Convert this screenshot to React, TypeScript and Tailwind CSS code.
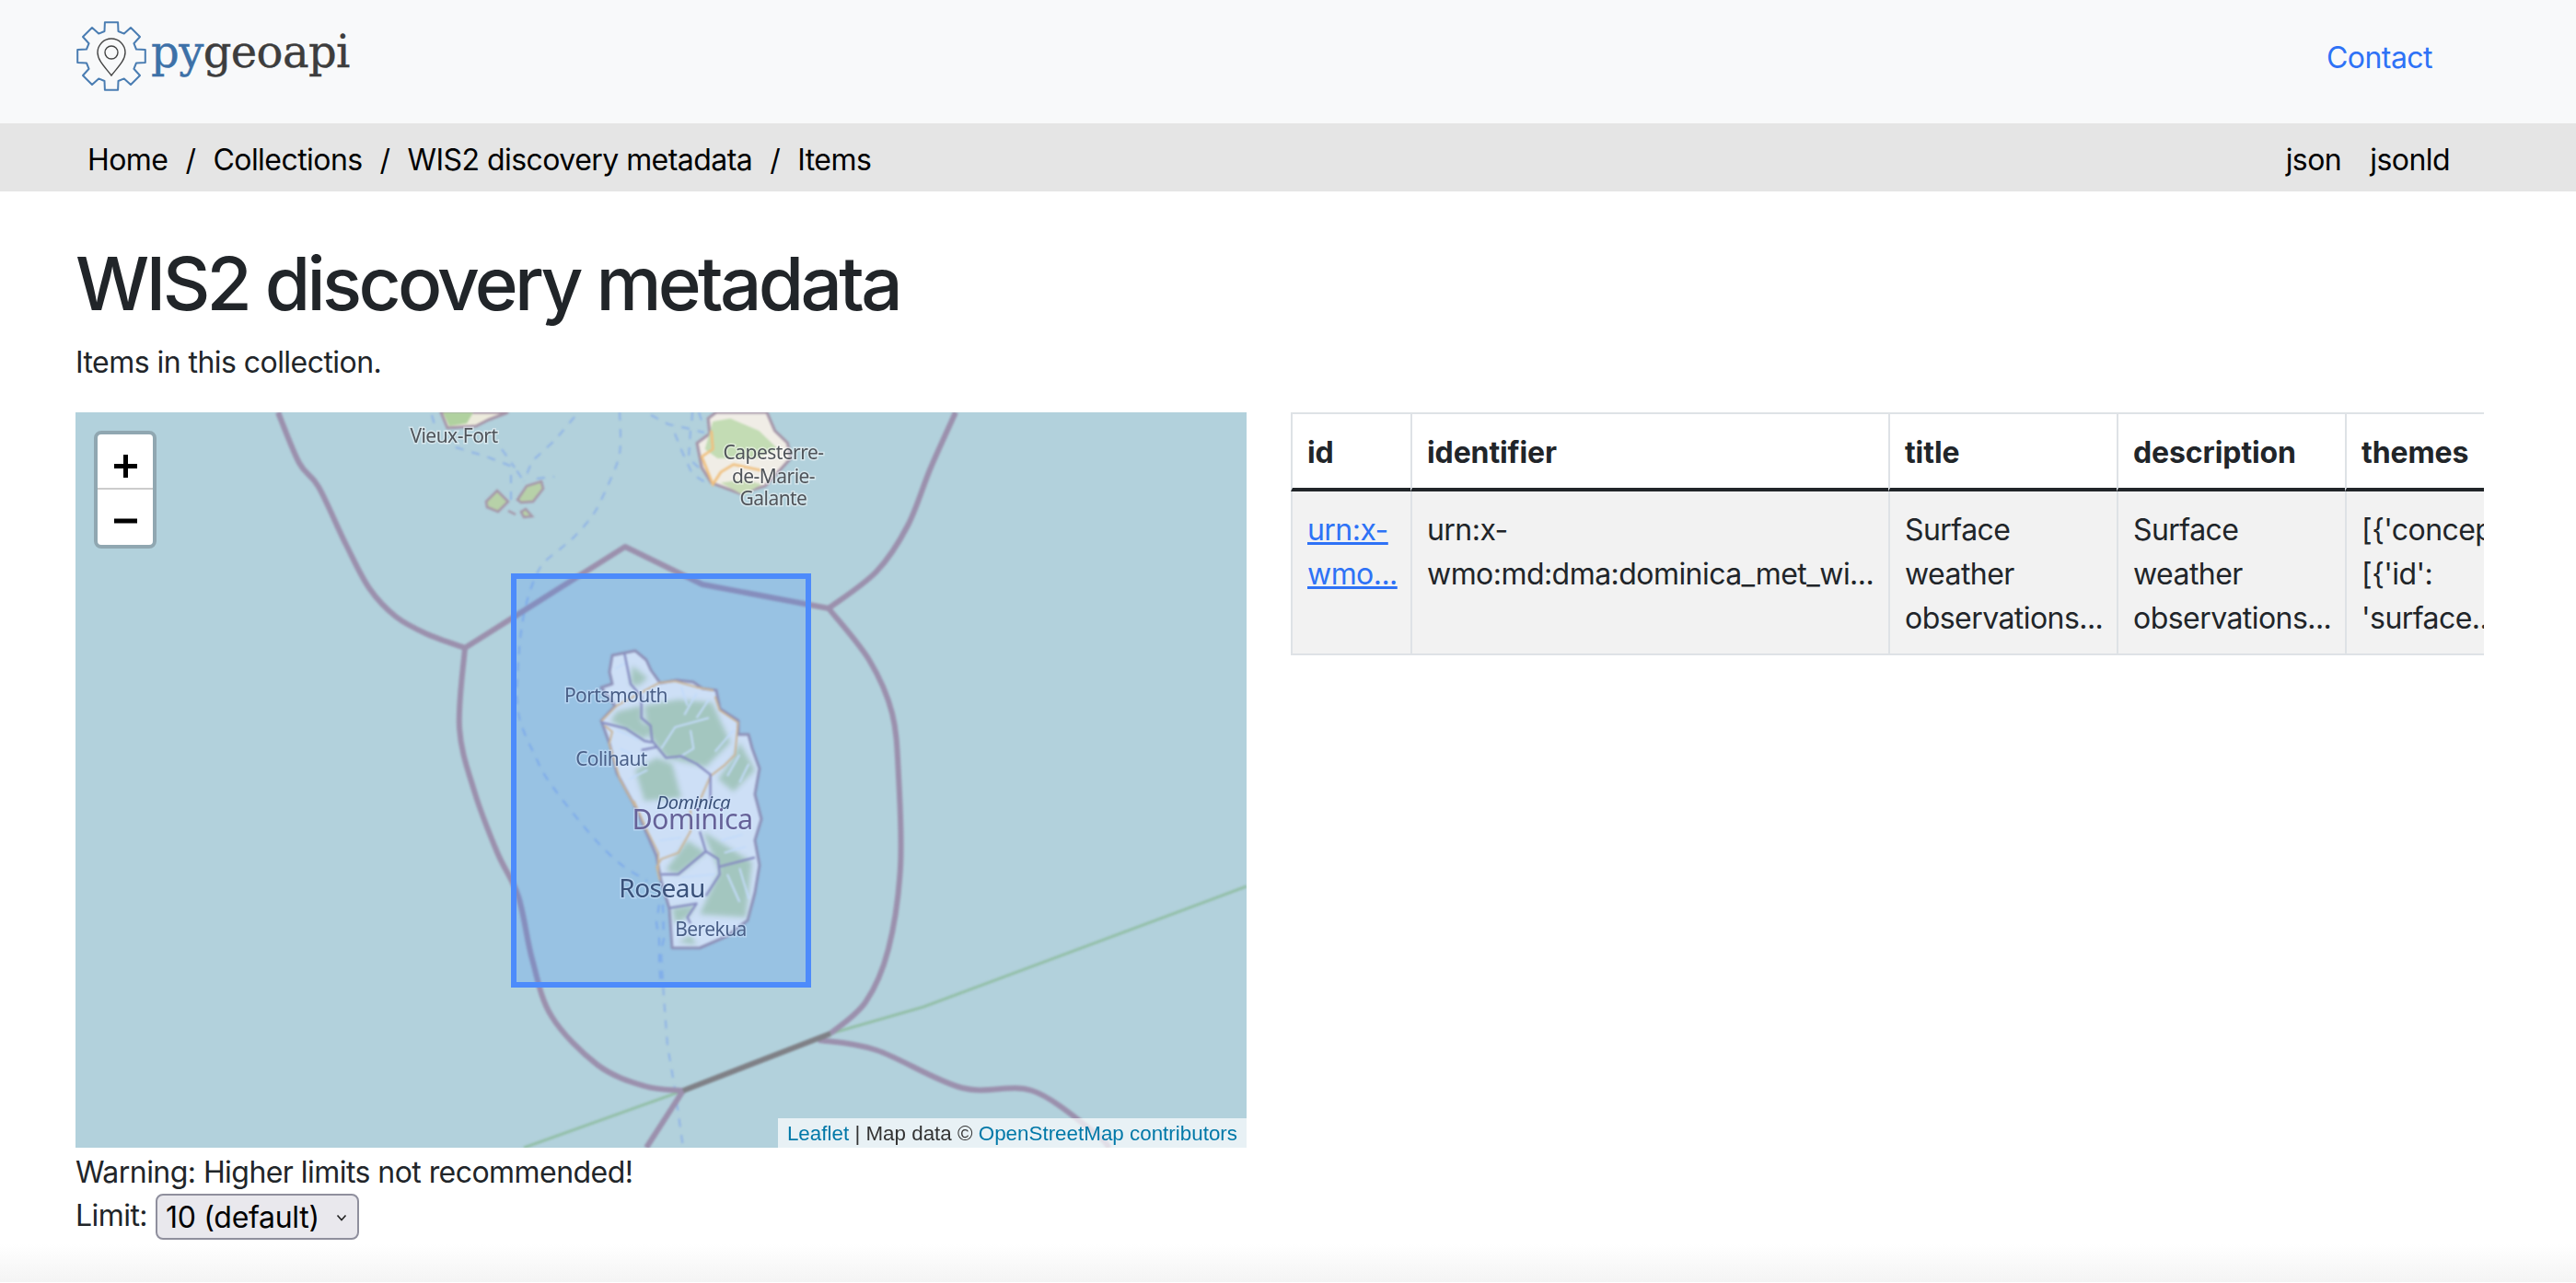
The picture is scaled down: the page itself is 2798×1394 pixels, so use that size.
function gearPath() {
  // 8 teeth, one pointing straight up
  const cx = 39
  const cy = 39
  const outer = 37.5
  const inner = 28
  const pts: string[] = []
  for (let i = 0; i < 8; i++) {
    const a = (i * Math.PI) / 4 - Math.PI / 2
    const w1 = 0.19
    const w2 = 0.27
    const p = (r: number, t: number) =>
      `${(cx + r * Math.cos(t)).toFixed(1)} ${(cy + r * Math.sin(t)).toFixed(1)}`
    pts.push(p(inner, a - w2), p(outer, a - w1), p(outer, a + w1), p(inner, a + w2))
  }
  return `M${pts.join("L")}Z`
}

// catmull-rom through the points, so the borders stay round
function smooth(pts: number[][]) {
  let d = `M${pts[0][0]} ${pts[0][1]}`
  for (let i = 0; i < pts.length - 1; i++) {
    const p0 = pts[i - 1] || pts[i]
    const p1 = pts[i]
    const p2 = pts[i + 1]
    const p3 = pts[i + 2] || p2
    const c1x = p1[0] + (p2[0] - p0[0]) / 6
    const c1y = p1[1] + (p2[1] - p0[1]) / 6
    const c2x = p2[0] - (p3[0] - p1[0]) / 6
    const c2y = p2[1] - (p3[1] - p1[1]) / 6
    d += `C${c1x.toFixed(1)} ${c1y.toFixed(1)} ${c2x.toFixed(1)} ${c2y.toFixed(1)} ${p2[0]} ${p2[1]}`
  }
  return d
}

function Logo() {
  return (
    <div className="flex items-start self-start pt-[22px]">
      <svg width="80" height="80" viewBox="0 0 80 80" fill="none" className="shrink-0">
        <path d={gearPath()} stroke="#4a7db2" strokeWidth={2} strokeLinejoin="round" />
        <path
          d="M39 60C33 52 24 44 24 35A15 15 0 0 1 54 35C54 44 45 52 39 60Z"
          stroke="#444"
          strokeWidth={1.4}
        />
        <circle cx="39" cy="35" r="7" stroke="#444" strokeWidth={1.4} />
      </svg>
      <span className="ml-[2px] mt-[4px] font-['DejaVu_Serif'] text-[48px] leading-[60px] tracking-[-0.6px] text-[#3d3d3d] [-webkit-text-stroke:0.4px_currentColor]">
        <span className="text-[#3d71a8]">py</span>geoapi
      </span>
    </div>
  )
}

function Sep() {
  return <span className="px-[19px]">/</span>
}

function MapDrawing() {
  return (
    <svg width="1272" height="799" viewBox="0 0 1272 799" fill="none" className="block">
      <g className="blur-[1px]">
        {/* Marie-Galante */}
        <g transform="translate(318 0) scale(0.345 0.333)">
          <path
            d="M1095 0L1070 20L1075 70L1035 100L1050 180L1080 230L1170 265L1250 240L1330 150L1320 100L1280 60L1255 0Z"
            fill="#f0ede6"
            stroke="#a595a8"
            strokeWidth={9}
          />
          <path d="M1085 30L1140 20L1230 60L1290 120L1220 150L1100 150L1060 120Z" fill="#c3dcb4" />
          <path d="M1110 230L1180 270L1240 235L1180 220Z" fill="#c8dcb6" />
          <path
            d="M1080 60L1085 120L1050 145L1085 235L1110 195L1150 170L1240 190"
            stroke="#f0c07f"
            strokeWidth={8}
          />
        </g>
        {/* Basse-Terre corner */}
        <path d="M397 0L404 17L435 15L449 8L470 0Z" fill="#ecebdc" stroke="#a595a8" strokeWidth={3} />
        <path d="M399 0L406 15L425 12L432 0Z" fill="#b0d19f" />
        {/* Les Saintes */}
        <g fill="#b7d1a8" stroke="#a595a8" strokeWidth={2.5}>
          <path d="M446 97L458 85L470 97L459 108L447 103Z" />
          <path d="M480 95L490 80L506 75L508 83L497 97L484 98Z" />
          <path d="M484 108L489 105L496 113L487 114Z" />
          <path d="M470 107L478 111" />
        </g>
        {/* Dominica */}
        <path
          d="M583 264L608 259L620 269L625 280L635 294L653 291L671 293L681 300L696 302L700 322L720 335L720 350L731 350L735 365L743 387L738 415L745 442L738 465L743 492L738 522L730 552L708 569L678 582L648 582L645 539L636 509L631 482L621 459L606 425L595 405L588 392L580 360L571 335L586 319L571 299L583 295L580 282Z"
          fill="#f4f5f4"
          stroke="#a595a8"
          strokeWidth={3}
          strokeLinejoin="round"
        />
        <g className="blur-[2.5px]" fill="#c0d6b0">
          <g transform="translate(508 232) scale(0.3333)">
            <path d="M330 260L440 240L550 250L610 380L530 460L400 430L340 350Z" />
            <path d="M240 280L320 260L320 310L350 340L330 370L220 310Z" />
            <path d="M290 130L340 170L310 195L285 190Z" />
            <path d="M640 380L690 470L620 540L570 500L620 430Z" />
            <path d="M300 470L370 430L420 450L450 560L330 570Z" />
          </g>
          <g transform="translate(508 422) scale(0.3333)">
            <path d="M520 100L680 200L660 380L510 370L575 230Z" />
            <path d="M470 130L530 170L440 240L400 225Z" />
            <path d="M420 350L500 340L470 380L430 400Z" />
            <path d="M440 460L500 470L480 440Z" />
          </g>
        </g>
        <g transform="translate(508 232) scale(0.3333)">
          <g stroke="#e8f1fa" strokeWidth={6}>
            <path d="M450 200L470 260M500 220L460 290M540 240L500 300M620 340L560 410M480 340L490 400L440 430" />
            <path d="M385 400L430 330L540 300M240 340L310 370M250 400L290 420M280 500L340 470" />
            <path d="M640 420L600 490M670 450L640 510M235 140L270 120" />
          </g>
          <g stroke="#f0c07f" strokeWidth={6} strokeLinejoin="round">
            <path d="M380 185L240 260L190 310" />
            <path d="M560 230L575 275L635 315L625 420L590 455L545 490L510 570" />
            <path d="M200 325L225 345L215 385L250 500L300 590" />
            <path d="M380 185L430 180L500 200L555 210" />
          </g>
          <g stroke="#9c8fb2" strokeWidth={7} strokeLinejoin="round">
            <path d="M265 90L285 190L320 230L320 300L350 325L355 375L400 430L450 425L500 450L545 485L545 570" />
            <path d="M190 315L270 335L330 375L355 380M320 405L370 395" />
          </g>
        </g>
        <g transform="translate(508 422) scale(0.3333)">
          <g stroke="#e8f1fa" strokeWidth={6}>
            <path d="M580 130L650 110M600 240L640 330M640 220L670 320M660 150L590 170M450 250L560 240M380 130L450 120" />
          </g>
          <g stroke="#f0c07f" strokeWidth={6} strokeLinejoin="round">
            <path d="M480 30L480 100L440 170L385 190L370 215L380 260" />
            <path d="M295 0L340 100L375 170L375 230" />
          </g>
          <g stroke="#9c8fb2" strokeWidth={7} strokeLinejoin="round">
            <path d="M510 100L530 165L440 240L385 240" />
            <path d="M530 165L570 190L575 240L530 310" />
            <path d="M575 215L690 185" />
            <path d="M410 350L470 340L500 335L470 380L480 400" />
          </g>
        </g>

        {/* maritime lines */}
        <g stroke="#8fb3e6" strokeWidth={2} strokeDasharray="9 9">
          <path d={smooth([[591, 0], [592, 33], [589, 53], [578, 80], [563, 110], [542, 135], [527, 148], [504, 170], [488, 215], [481, 270], [481, 327], [500, 375], [517, 405], [559, 458], [591, 490], [621, 509]])} />
          <path d="M634 535L631 555L634 572L634 599L636 625" />
          <path d="M638 535L639 572L636 585L637 605L639 635L643 688L651 735L660 799" />
          <path d="M413 38L446 48L477 60L487 75" />
          <path d="M542 5L521 30L496 53L487 75" />
          <path d="M387 3L392 20M463 40L477 60M473 68L473 95M501 72L520 70" />
          <path d="M625 3L644 13L663 17L683 22M651 23L659 43L670 67L687 78M668 20L666 50L677 60M670 0L669 17M677 0L683 17" />
        </g>
        {/* green line */}
        <path d="M1272 515L921 646L820 675L660 737L487 799" stroke="#93bfa8" strokeWidth={3} />
        {/* boundaries */}
        <g stroke="#9b90ad" strokeWidth={6} strokeLinejoin="round">
          <path d={smooth([[220, 0], [243, 55], [264, 81], [294, 144], [319, 191], [348, 222], [382, 241], [423, 256]])} />
          <path d="M423 256L597 146L681 187L818 213" />
          <path d={smooth([[956, 0], [929, 60], [904, 123], [870, 173], [818, 213]])} />
          <path d={smooth([[818, 213], [862, 269], [887, 327], [894, 395], [896, 494], [883, 583], [858, 641], [820, 675]])} />
          <path d={smooth([[423, 256], [417, 343], [433, 411], [458, 478], [481, 526], [496, 594], [517, 656], [567, 709], [618, 732], [660, 737]])} />
          <path d="M660 737L620 799" />
          <path d={smooth([[807, 682], [870, 693], [963, 734], [1039, 737], [1106, 782], [1123, 799]])} />
          <path d="M820 675L660 737" stroke="#7f8086" />
        </g>
      </g>

      {/* place labels */}
      <g
        className="blur-[0.5px]"
        fontFamily="'Noto Sans', sans-serif"
        textAnchor="middle"
        fill="#50545a"
        stroke="#ffffff"
        strokeOpacity={0.45}
        strokeWidth={3}
        style={{ paintOrder: "stroke" }}
      >
        <text x="411" y="33" fontSize="21">Vieux-Fort</text>
        <text x="758" y="51" fontSize="21">Capesterre-</text>
        <text x="758" y="77" fontSize="21">de-Marie-</text>
        <text x="758" y="101" fontSize="21">Galante</text>
        <text x="587" y="315" fontSize="21" fill="#50566a">Portsmouth</text>
        <text x="582" y="384" fontSize="21" fill="#50566a">Colihaut</text>
        <text x="671" y="431" fontSize="20" fontStyle="italic" fill="#3c4458">Dominica</text>
        <text x="670" y="453" fontSize="30.5" fill="#74597f">Dominica</text>
        <text x="637" y="527" fontSize="28" fill="#3c4458">Roseau</text>
        <text x="690" y="569" fontSize="21" fill="#50566a">Berekua</text>
      </g>

      {/* dataset extent */}
      <rect
        x="476"
        y="178"
        width="320"
        height="444"
        fill="#3388ff"
        fillOpacity={0.2}
        stroke="#4d8bfb"
        strokeWidth={6}
      />
    </svg>
  )
}

function ZoomControl() {
  return (
    <div className="absolute left-[20px] top-[20px] w-[68px] rounded-[8px] border-4 border-[#90a7b1] bg-white font-['Liberation_Sans',sans-serif] text-black">
      <div className="flex h-[60px] items-center justify-center border-b-2 border-[#ccc]">
        <svg width="25" height="25" viewBox="0 0 25 25" className="mt-[10px]">
          <path d="M0 12.5H25M12.5 0V25" stroke="#000" strokeWidth={5} />
        </svg>
      </div>
      <div className="flex h-[60px] items-center justify-center">
        <svg width="25" height="6" viewBox="0 0 25 6" className="mt-[8px]">
          <path d="M0 3H25" stroke="#000" strokeWidth={5} />
        </svg>
      </div>
    </div>
  )
}

function ItemsTable() {
  const th = "border-l-2 border-[#dee2e6] border-b-4 border-b-[#212529] pt-[18px] pb-[14px] px-4 text-left font-bold tracking-[-0.1px] align-bottom"
  const td = "border-l-2 border-[#dee2e6] bg-[#f2f2f2] pt-[18px] pb-[14px] px-4 align-top"
  return (
    <div className="h-fit w-[1296px] overflow-hidden border-y-2 border-[#dee2e6]">
      <table className="w-[1445px] table-fixed border-separate border-spacing-0 text-[32px] leading-[48px]">
        <colgroup>
          <col className="w-[130px]" />
          <col className="w-[519px]" />
          <col className="w-[248px]" />
          <col className="w-[248px]" />
          <col className="w-[300px]" />
        </colgroup>
        <thead>
          <tr>
            <th className={th}>id</th>
            <th className={th}>identifier</th>
            <th className={th}>title</th>
            <th className={th}>description</th>
            <th className={th}>themes</th>
          </tr>
        </thead>
        <tbody>
          <tr>
            <td className={td}>
              <a href="#" className="text-[#2e72f6] underline">
                urn:x-
                <br />
                wmo...
              </a>
            </td>
            <td className={td}>
              urn:x-
              <br />
              wmo:md:dma:dominica_met_wi...
            </td>
            <td className={td}>
              Surface
              <br />
              weather
              <br />
              observations...
            </td>
            <td className={td}>
              Surface
              <br />
              weather
              <br />
              observations...
            </td>
            <td className={`${td} whitespace-nowrap`}>
              [{"{"}'concept':
              <br />
              [{"{"}'id':
              <br />
              'surface...
            </td>
          </tr>
        </tbody>
      </table>
    </div>
  )
}

export default function App() {
  return (
    <div className="font-['Inter',sans-serif] text-[32px] leading-[48px] tracking-[-0.55px] text-[#212529]">
      <header className="flex h-[134px] items-center justify-between bg-[#f8f9fa] pl-[82px] pr-[156px]">
        <Logo />
        <a href="#" className="mb-[8px] text-[#2e72f6]">
          Contact
        </a>
      </header>

      <nav className="flex h-[74px] items-center justify-between bg-[#e5e5e5] pl-[95px] pr-[137px] pt-[5px] text-black">
        <div className="flex">
          <span>Home</span>
          <Sep />
          <span>Collections</span>
          <Sep />
          <span>WIS2 discovery metadata</span>
          <Sep />
          <span>Items</span>
        </div>
        <div className="flex gap-[31px]">
          <span>json</span>
          <span>jsonld</span>
        </div>
      </nav>

      <main className="px-[82px]">
        <h1 className="mt-[52px] text-[80px] font-medium leading-[96px] tracking-[-3.7px]">WIS2 discovery metadata</h1>
        <p className="mt-[14px] mb-[-2px]">Items in this collection.</p>

        <div className="mt-[32px] flex gap-[48px]">
          <div>
            <div className="relative h-[799px] w-[1272px] overflow-hidden bg-[#b2d1dc]">
              <MapDrawing />
              <ZoomControl />
              <div className="absolute bottom-0 right-0 flex h-[32px] items-center bg-white/70 px-[10px] pt-[2px] font-['Liberation_Sans',sans-serif] text-[22.4px] leading-none tracking-normal text-[#333]">
                <a href="#" className="text-[#0078a8]">
                  Leaflet
                </a>
                <span className="whitespace-pre"> | Map data © </span>
                <a href="#" className="text-[#0078a8]">
                  OpenStreetMap contributors
                </a>
              </div>
            </div>
            <p className="mt-[3px] mb-[-3px]">Warning: Higher limits not recommended!</p>
            <div className="flex items-center">
              <label htmlFor="limit">Limit:</label>
              <div className="relative ml-[9px] mt-[2px]">
                <select
                  id="limit"
                  defaultValue="10"
                  className="block h-[50px] w-[221px] appearance-none rounded-[8px] border-2 border-[#8f8f9d] bg-[#e9e8ed] pl-[9px] text-[32px] tracking-[-0.3px] text-black"
                >
                  <option value="10">10 (default)</option>
                  <option value="100">100</option>
                  <option value="1000">1000</option>
                </select>
                <svg
                  width="12"
                  height="8"
                  viewBox="0 0 12 8"
                  fill="none"
                  className="pointer-events-none absolute right-[13px] top-[22px]"
                >
                  <path d="M1.5 1.5L6 6.5L10.5 1.5" stroke="#222" strokeWidth={1.6} />
                </svg>
              </div>
            </div>
          </div>
          <ItemsTable />
        </div>
      </main>

      <div className="mt-[5px] h-[41px] bg-linear-to-b from-white to-[#f4f4f4]" />
    </div>
  )
}
